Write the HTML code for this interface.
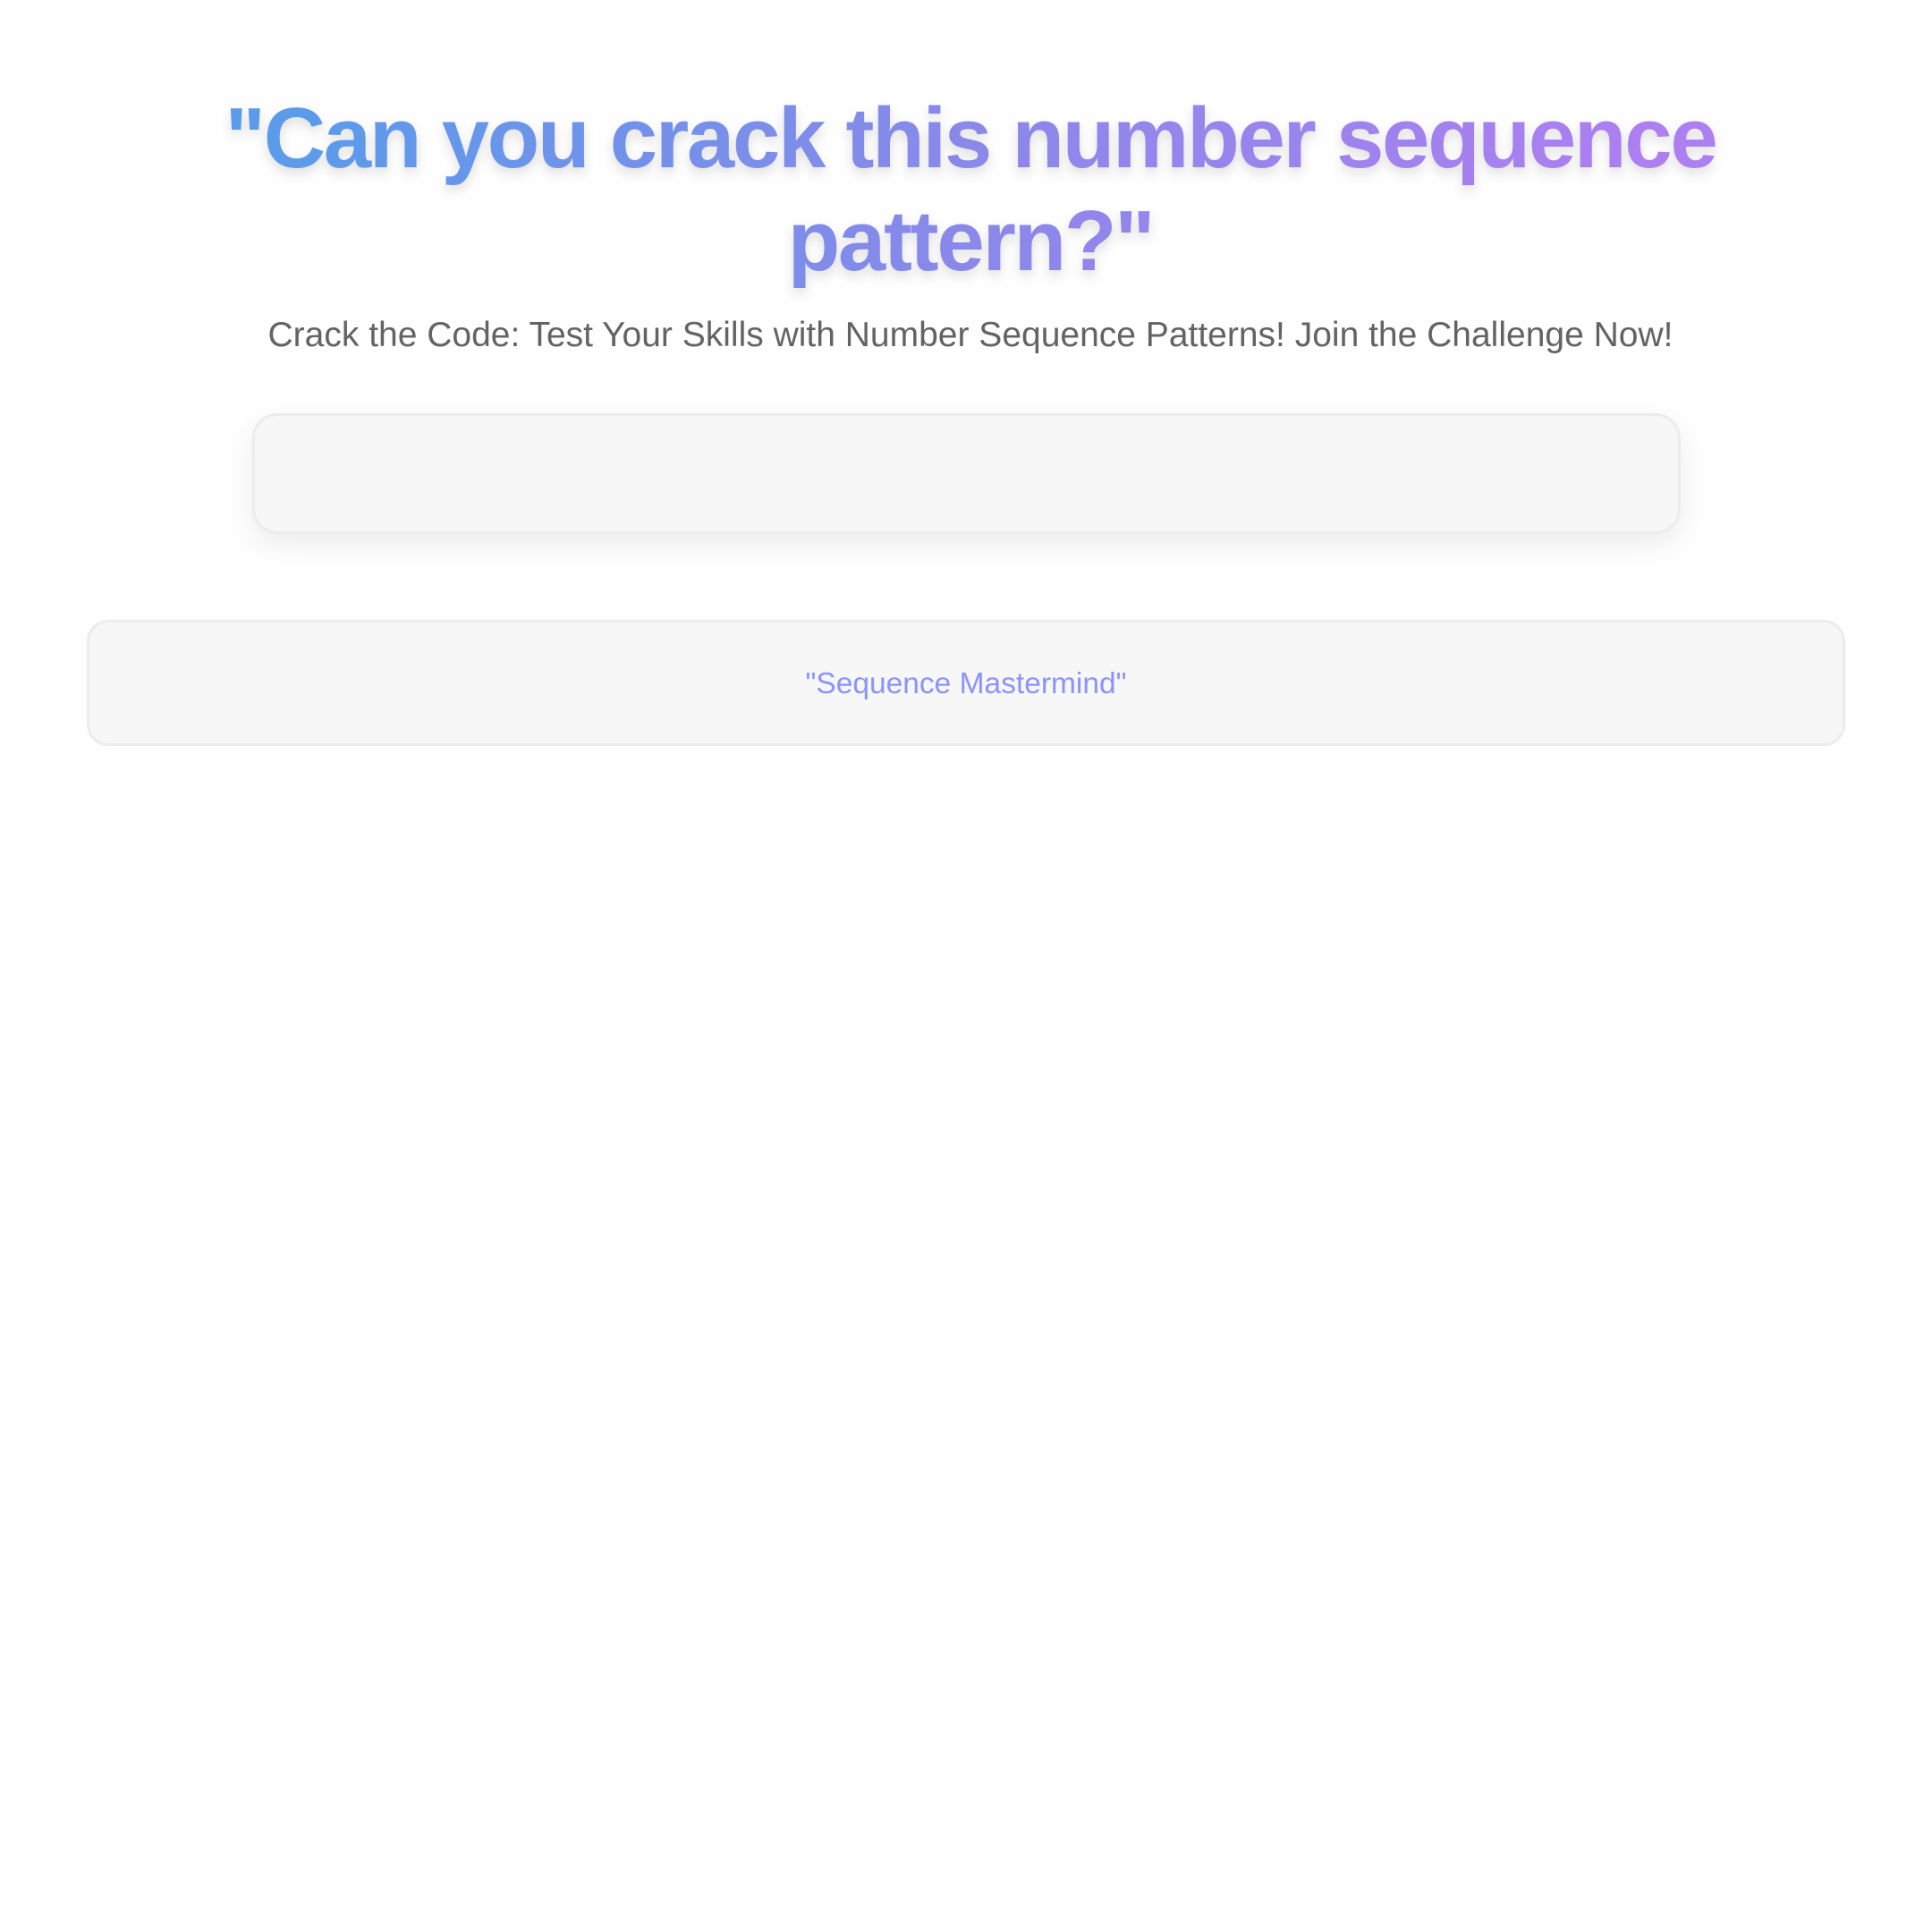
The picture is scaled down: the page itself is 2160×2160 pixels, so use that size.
<!DOCTYPE html>
<html><head><meta charset="utf-8"><style>
html,body{margin:0;padding:0;background:#fefefe;}
body{width:2160px;height:2160px;font-family:"Liberation Sans",sans-serif;position:relative;overflow:hidden;}
h1{position:absolute;left:97px;width:1976px;top:97px;margin:0;text-align:center;font-size:96px;line-height:115px;font-weight:bold;letter-spacing:-2.3px;white-space:nowrap;
background:linear-gradient(90deg,#5b9bea 12%,#8a88ea 50%,#ad7ff0 88%);-webkit-background-clip:text;background-clip:text;color:transparent;
filter:drop-shadow(0 6px 6px rgba(0,0,0,0.12));}
.sub{position:absolute;left:97px;width:1976px;top:353px;text-align:center;font-size:39px;color:#636363;}
.b1{position:absolute;left:282px;top:462px;width:1591px;height:129px;background:#f7f7f7;border:3px solid #ececec;border-radius:28px;box-shadow:0 12px 30px rgba(0,0,0,0.07);}
.b2{position:absolute;left:97px;top:693px;width:1960px;height:135px;background:#f7f7f7;border:3px solid #ececec;border-radius:24px;}
.b2 span{position:absolute;left:0;right:0;top:50px;text-align:center;font-size:33.5px;color:#8b93ff;}
</style></head><body>
<h1>"Can you crack this number sequence<br>pattern?"</h1>
<div class="sub">Crack the Code: Test Your Skills with Number Sequence Patterns! Join the Challenge Now!</div>
<div class="b1"></div>
<div class="b2"><span>"Sequence Mastermind"</span></div>
</body></html>
